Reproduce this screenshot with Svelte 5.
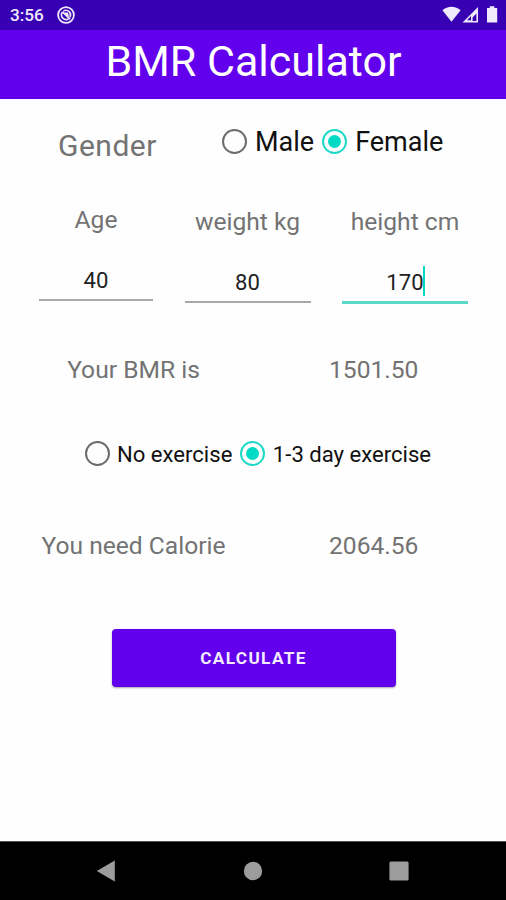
<script lang="ts">
  let gender = $state("female");
  let exercise = $state("light");
  let bmr = $state("1501.50");
  let calorie = $state("2064.56");

  const genders = [
    { id: "male", label: "Male" },
    { id: "female", label: "Female" },
  ];
  const levels = [
    { id: "none", label: "No exercise" },
    { id: "light", label: "1-3 day exercise" },
  ];
  const fields = [
    { id: "age", label: "Age", value: 40 },
    { id: "weight", label: "weight kg", value: 80 },
    { id: "height", label: "height cm", value: 170 },
  ];
  let focused = $state("height");

  function calculate() {
    const [age, weight, height] = fields.map((f) => f.value);
    const base =
      gender === "female"
        ? 655.1 + 9.563 * weight + 1.85 * height - 4.676 * age
        : 66.5 + 13.75 * weight + 5.003 * height - 6.755 * age;
    bmr = base.toFixed(2);
    calorie = (base * (exercise === "light" ? 1.375 : 1.2)).toFixed(2);
  }
</script>

{#snippet radio(label: string, checked: boolean, pick: () => void)}
  <button class="radio" class:checked role="radio" aria-checked={checked} onclick={pick}>
    <span class="ring"></span>
    <span>{label}</span>
  </button>
{/snippet}

<div class="screen">
  <div class="status">
    <span class="clock">3:56</span>
    <svg class="dnd" width="20" height="20" viewBox="0 0 20 20" fill="none" stroke="currentColor">
      <circle cx="10" cy="10" r="7.9" stroke-width="1.8" />
      <path d="M6.2 7.4A4.7 4.7 0 0 0 12.6 13.9M7.6 5.9A4.7 4.7 0 0 1 14 12.2" stroke-width="1.6" />
      <path d="M6.4 6.6L14 14.2M9 8.4h2.2l.9 2.4" stroke-width="1.9" />
    </svg>
    <svg class="signals" width="56" height="18" viewBox="0 0 56 18" fill="currentColor">
      <path d="M0.4 4.3C5.6-.4 13.4-.4 18.6 4.3L9.5 15.8z" />
      <path d="M36 1V16.5H20.5zM34.4 7.6L30.6 11.4V14.9H34.4z" fill-rule="evenodd" />
      <path class="notch" d="M29 10L25 14.2H29z" />
      <path d="M45 2H47.8V.3H52.4V2H55.2V16.5H45z" />
    </svg>
  </div>

  <h1>BMR Calculator</h1>

  <main>
    <div class="gender">
      <span class="caption">Gender</span>
      <div class="group" role="radiogroup" aria-label="Gender">
        {#each genders as g}
          {@render radio(g.label, gender === g.id, () => (gender = g.id))}
        {/each}
      </div>
    </div>

    <div class="fields">
      {#each fields as f}
        <div class="field {f.id}">
          <span class="name">{f.label}</span>
          <button class="input" class:focused={focused === f.id} onclick={() => (focused = f.id)}>
            <span class="value">{f.value}</span>
          </button>
        </div>
      {/each}
    </div>

    <div class="result">
      <span>Your BMR is</span>
      <span>{bmr}</span>
    </div>

    <div class="group levels" role="radiogroup" aria-label="Exercise">
      {#each levels as l}
        {@render radio(l.label, exercise === l.id, () => (exercise = l.id))}
      {/each}
    </div>

    <div class="result">
      <span>You need Calorie</span>
      <span>{calorie}</span>
    </div>

    <button class="calculate" onclick={calculate}>CALCULATE</button>
  </main>

  <nav>
    <svg width="20" height="22" viewBox="0 0 20 22"><path d="M.8 11L18.8.6V21.4z" /></svg>
    <svg width="20" height="20" viewBox="0 0 20 20"><circle cx="10" cy="10" r="9.2" /></svg>
    <svg width="20" height="20" viewBox="0 0 20 20"><rect x=".4" y=".4" width="19.2" height="19.2" rx="1.5" /></svg>
  </nav>
</div>

<style>
  :global(body) {
    margin: 0;
    background: #fff;
  }
  .screen {
    display: flex;
    flex-direction: column;
    width: 506px;
    height: 900px;
    overflow: hidden;
    background: #fefefe;
    font-family: Roboto, sans-serif;
    color: #737373;
  }
  button {
    padding: 0;
    border: 0;
    background: none;
    font: inherit;
    color: inherit;
    outline: none;
  }
  .status {
    flex: none;
    display: flex;
    align-items: center;
    height: 30px;
    box-sizing: border-box;
    padding: 0 8px 0 10px;
    background: #3700b3;
    color: #efe9fc;
  }
  .clock {
    width: 46px;
    font-size: 17.2px;
    font-weight: 500;
    line-height: 30px;
  }
  .signals { margin-left: auto; }
  .notch { fill: #3700b3; }
  h1 {
    flex: none;
    height: 69px;
    margin: 0;
    padding-left: 1px;
    background: #6200ee;
    color: #fff;
    font-size: 43px;
    font-weight: 400;
    line-height: 63px;
    text-align: center;
  }
  main {
    flex: 1;
    display: flex;
    flex-direction: column;
  }
  .gender {
    display: flex;
    align-items: flex-start;
    height: 96px;
    padding: 22px 0 0 58px;
    box-sizing: border-box;
  }
  .caption {
    width: 164px;
    margin-top: 7px;
    font-size: 30px;
    line-height: 36px;
    letter-spacing: 0.5px;
  }
  .group {
    display: flex;
    gap: 8px;
    font-size: 27px;
    line-height: 40px;
  }
  .radio {
    display: flex;
    align-items: center;
    gap: 8px;
    color: #111;
    white-space: nowrap;
  }
  .radio span:last-child { padding-top: 1px; }
  .ring {
    display: grid;
    place-items: center;
    width: 25px;
    height: 25px;
    box-sizing: border-box;
    border: 2.4px solid #6b6b6b;
    border-radius: 50%;
  }
  .checked .ring { border-color: #1bd9c6; }
  .checked .ring::after {
    content: "";
    width: 13px;
    height: 13px;
    border-radius: 50%;
    background: #03dac5;
  }
  .fields {
    display: grid;
    grid-template-columns: 114px 126px 126px;
    column-gap: 31.5px;
    height: 156px;
    padding-left: 39px;
  }
  .field {
    display: flex;
    flex-direction: column;
    padding-top: 12px;
  }
  .age { padding-top: 10px; }
  .name {
    font-size: 24.6px;
    line-height: 30px;
    text-align: center;
    white-space: nowrap;
  }
  .input {
    height: 66px;
    padding-top: 25px;
    box-sizing: border-box;
    border-bottom: 2px solid #a8a8a8;
    font-size: 22.1px;
    line-height: 34px;
    color: #222;
  }
  .focused {
    height: 67px;
    border-bottom: 3px solid #5bd9c8;
  }
  .value { display: inline-block; position: relative; }
  .focused .value::after {
    content: "";
    position: absolute;
    right: -1px;
    top: 1px;
    width: 2px;
    height: 30px;
    background: #03dac5;
  }
  .result {
    display: grid;
    grid-template-columns: 267px 1fr;
    align-items: center;
    height: 36px;
    font-size: 24.6px;
  }
  .result span:first-child { text-align: center; }
  .result span:last-child { padding-left: 62px; }
  .levels {
    height: 40px;
    margin: 46px 0 54px 84.5px;
    font-size: 22.1px;
  }
  .levels .radio { gap: 7.5px; }
  .calculate {
    width: 284px;
    height: 58px;
    margin: 66px auto 0 111.5px;
    border-radius: 4px;
    background: #6200ee;
    box-shadow: 0 1px 2px rgba(0, 0, 0, 0.35);
    color: #f3ebff;
    font-size: 17.2px;
    font-weight: 700;
    letter-spacing: 1.35px;
  }
  nav {
    flex: none;
    display: flex;
    align-items: center;
    justify-content: space-between;
    height: 59px;
    padding: 0 97px 1px 96px;
    box-sizing: border-box;
    border-top: 1px solid #555;
    background: #000;
    fill: #9c9c9c;
  }
</style>
